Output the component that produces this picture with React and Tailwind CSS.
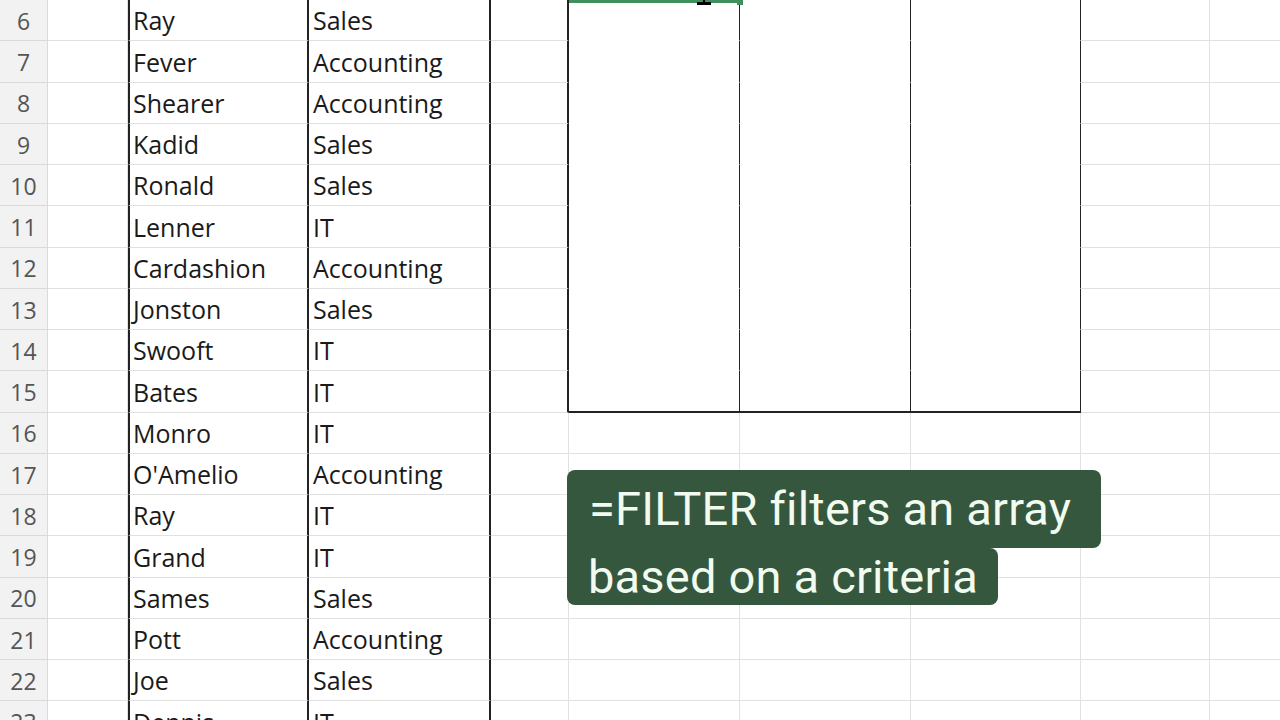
import React from "react";

const rows = [
  [6, "Ray", "Sales"],
  [7, "Fever", "Accounting"],
  [8, "Shearer", "Accounting"],
  [9, "Kadid", "Sales"],
  [10, "Ronald", "Sales"],
  [11, "Lenner", "IT"],
  [12, "Cardashion", "Accounting"],
  [13, "Jonston", "Sales"],
  [14, "Swooft", "IT"],
  [15, "Bates", "IT"],
  [16, "Monro", "IT"],
  [17, "O'Amelio", "Accounting"],
  [18, "Ray", "IT"],
  [19, "Grand", "IT"],
  [20, "Sames", "Sales"],
  [21, "Pott", "Accounting"],
  [22, "Joe", "Sales"],
  [23, "Dennis", "IT"],
];

export default function App() {
  return (
    <div
      className="relative w-[1280px] h-[720px] overflow-hidden bg-white text-[#1a1a1a]"
      style={{ fontFamily: "'Open Sans', Lato, sans-serif" }}
    >
      <div className="flex flex-col">
        {rows.map(([n, name, dept]) => {
          const boxed = n <= 15;
          const last = n === 15;
          const outCls = boxed
            ? `border-r border-r-[#222] ${last ? "border-b-2 border-b-[#222]" : "border-b border-b-transparent"}`
            : "border-r border-b border-[#e1e1e1]";
          return (
            <div key={n} className="flex h-[41.25px] shrink-0">
              <div className="w-[48px] shrink-0 bg-[#f2f2f2] border-r border-b border-[#dadada] flex items-center justify-center text-[23px] text-[#555] pt-[2px]">
                {n}
              </div>
              <div className="w-[80px] shrink-0 border-r border-b border-[#e1e1e1]" />
              <div className="w-[181px] shrink-0 border-l-2 border-l-[#222] border-r-2 border-r-[#222] border-b border-b-[#e1e1e1] flex items-center pl-[3px] pt-[2px] text-[25px]">
                {name}
              </div>
              <div className="w-[182px] shrink-0 border-r-2 border-r-[#222] border-b border-b-[#e1e1e1] flex items-center pl-[4px] pt-[2px] text-[25px]">
                {dept}
              </div>
              <div className={`w-[78px] shrink-0 border-b border-[#e1e1e1] ${boxed ? "border-r-2 border-r-[#222]" : "border-r border-r-[#e1e1e1]"}`} />
              <div className={`w-[171px] shrink-0 ${outCls}`} />
              <div className={`w-[171px] shrink-0 ${outCls}`} />
              <div className={`w-[170px] shrink-0 ${outCls}`} />
              <div className="w-[129px] shrink-0 border-r border-b border-[#e1e1e1]" />
              <div className="flex-1 border-b border-[#e1e1e1]" />
            </div>
          );
        })}
      </div>

      {/* selection */}
      <div className="absolute left-[569px] top-0 w-[172px] h-[3px] bg-[#3f8f5f]" />
      <div className="absolute left-[737px] top-0 w-[6px] h-[5px] bg-[#3f8f5f]" />
      <div className="absolute left-[697px] top-[2px] w-[14px] h-[3px] bg-black" />
      <div className="absolute left-[703px] top-0 w-[2px] h-[4px] bg-black" />

      {/* caption */}
      <div
        className="absolute left-[567px] top-[470px] flex flex-col items-start text-[47px] leading-[57px] text-[#f1fbf0]"
        style={{ fontFamily: "Roboto, 'Noto Sans', sans-serif" }}
      >
        <div className="bg-[#35573d] rounded-[8px] rounded-bl-none pl-[22px] pr-[30px] pt-[10px] pb-[11px] tracking-[0.2px]">
          =FILTER filters an array
        </div>
        <div className="bg-[#35573d] rounded-[8px] rounded-tl-none pl-[21px] pr-[20px] tracking-[0.2px]">
          based on a criteria
        </div>
      </div>
    </div>
  );
}
